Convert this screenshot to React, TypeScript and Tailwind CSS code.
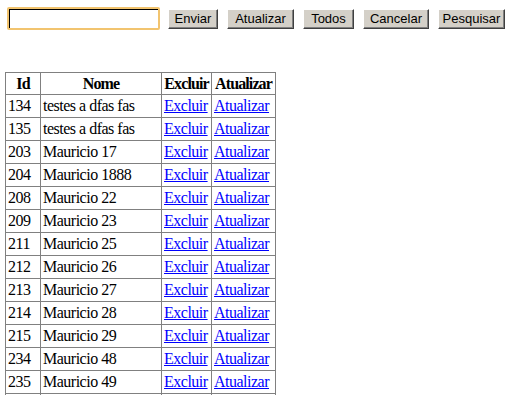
const rows: [number, string][] = [
  [134, 'testes a dfas fas'],
  [135, 'testes a dfas fas'],
  [203, 'Mauricio 17'],
  [204, 'Mauricio 1888'],
  [208, 'Mauricio 22'],
  [209, 'Mauricio 23'],
  [211, 'Mauricio 25'],
  [212, 'Mauricio 26'],
  [213, 'Mauricio 27'],
  [214, 'Mauricio 28'],
  [215, 'Mauricio 29'],
  [234, 'Mauricio 48'],
  [235, 'Mauricio 49'],
  [236, 'Mauricio 50'],
]

const buttons: [string, string][] = [
  ['Enviar', 'w-[50px]'],
  ['Atualizar', 'w-[67px]'],
  ['Todos', 'w-[51px]'],
  ['Cancelar', 'w-[66px]'],
  ['Pesquisar', 'w-[67px]'],
]

export default function App() {
  const btnClass =
    'h-[20px] bg-[#d4d0c8] text-[13px] text-black leading-none border border-t-white border-l-white border-r-[#404040] border-b-[#404040] shadow-[inset_-1px_-1px_0_#808080]'
  const cellClass = 'border border-[#808080] px-[2px] py-[1px] leading-[20px] whitespace-nowrap overflow-hidden'
  const headClass = 'border border-[#808080] px-0 py-[1px] leading-[19px] whitespace-nowrap overflow-hidden tracking-[-0.9px]'

  return (
    <div className="bg-white h-[395px] overflow-hidden font-['Liberation_Serif',serif] text-[16px] text-black">
      {/* barra de busca */}
      <div className="flex items-center pt-[7px] pl-[7px]">
        <div className="w-[153px] h-[23px] rounded-[2px] border-2 border-[#f2c46f]">
          <input className="block w-full h-full bg-white border-t border-l border-black outline-none" />
        </div>
        <div className="flex items-center gap-[9px] ml-[8px] font-['Liberation_Sans',Arial,sans-serif]">
          {buttons.map(([label, w]) => (
            <button key={label} className={`${btnClass} ${w}`}>
              {label}
            </button>
          ))}
        </div>
      </div>

      {/* tabela */}
      <table className="mt-[42px] ml-[5px] table-fixed w-[270px] border-collapse border border-[#808080] tracking-[-0.5px]">
        <thead>
          <tr>
            <th className={`${headClass} w-[35px]`}>Id</th>
            <th className={`${headClass} w-[121px]`}>Nome</th>
            <th className={`${headClass} w-[50px]`}>Excluir</th>
            <th className={`${headClass} w-[64px]`}>Atualizar</th>
          </tr>
        </thead>
        <tbody>
          {rows.map(([id, nome]) => (
            <tr key={id}>
              <td className={cellClass}>{id}</td>
              <td className={cellClass}>{nome}</td>
              <td className={cellClass}>
                <a href="#" className="text-[#0000ff] underline">Excluir</a>
              </td>
              <td className={cellClass}>
                <a href="#" className="text-[#0000ff] underline">Atualizar</a>
              </td>
            </tr>
          ))}
        </tbody>
      </table>
    </div>
  )
}
